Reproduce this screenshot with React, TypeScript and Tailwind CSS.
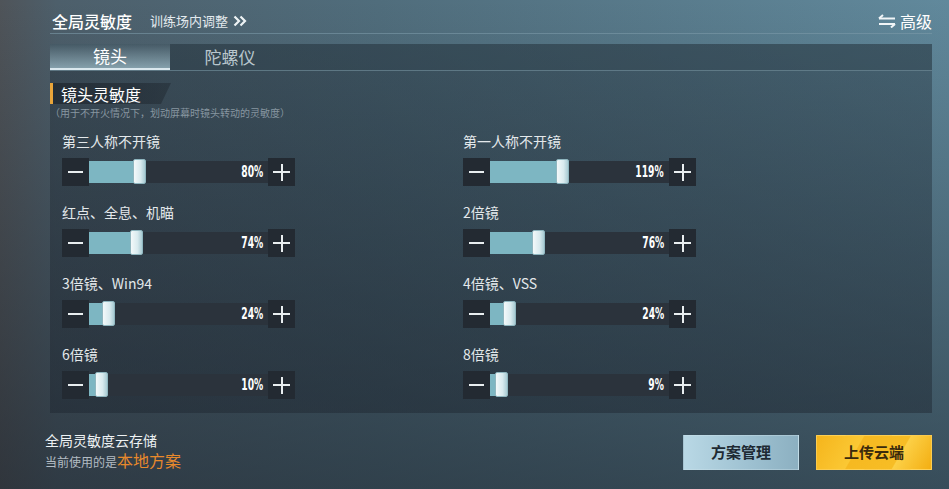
import React from "react";

type Item = { label: string; value: number };

const LEFT: Item[] = [
  { label: "第三人称不开镜", value: 80 },
  { label: "红点、全息、机瞄", value: 74 },
  { label: "3倍镜、Win94", value: 24 },
  { label: "6倍镜", value: 10 },
];

const RIGHT: Item[] = [
  { label: "第一人称不开镜", value: 119 },
  { label: "2倍镜", value: 76 },
  { label: "4倍镜、VSS", value: 24 },
  { label: "8倍镜", value: 9 },
];

const CJK = "font-['Noto_Sans_CJK_SC','Noto_Sans',sans-serif]";
const NUM = "font-['DejaVu_Sans_Condensed','Roboto',sans-serif]";

function Slider({ label, value }: Item) {
  // 0..300% mapped across the track, thumb 13px wide
  const trackW = 179;
  const thumbW = 13;
  const left = (value / 300) * (trackW - thumbW);

  return (
    <div className="flex flex-col">
      <div className={`h-5 text-[14px] leading-5 text-[#e3e8eb] ${CJK}`}>{label}</div>
      <div className="mt-[7px] flex h-7 w-[233px] items-center">
        <div className="flex h-7 w-[27px] items-center justify-center bg-[#232a32]">
          <div className="h-[2px] w-[15px] bg-[#e9eef0]" />
        </div>
        <div className="relative h-[22px] w-[179px] bg-[#2b333c]">
          <div
            className="absolute inset-y-0 left-0 bg-[#7db6c2]"
            style={{ width: left + thumbW / 2 }}
          />
          <div
            className="absolute top-[-2px] h-[25px] w-[13px] rounded-[2px] border border-[#8fb6bf] bg-[linear-gradient(90deg,#f3f9fa_0%,#d8eaee_60%,#a9cbd3_100%)]"
            style={{ left }}
          />
          <div
            className={`absolute right-[5px] top-0 flex h-full origin-right scale-x-[0.68] items-center text-[15px] font-bold text-white ${NUM}`}
          >
            {value}%
          </div>
        </div>
        <div className="relative flex h-7 w-[27px] items-center justify-center bg-[#232a32]">
          <div className="h-[2px] w-[17px] bg-[#e9eef0]" />
          <div className="absolute h-[17px] w-[2px] bg-[#e9eef0]" />
        </div>
      </div>
    </div>
  );
}

function Column({ items }: { items: Item[] }) {
  return (
    <div className="flex flex-col gap-4">
      {items.map((it) => (
        <Slider key={it.label} {...it} />
      ))}
    </div>
  );
}

export default function App() {
  return (
    <div
      className={`relative flex h-[489px] w-[949px] flex-col overflow-hidden bg-[linear-gradient(180deg,rgba(0,0,0,0)_0%,rgba(22,28,36,0.55)_100%),linear-gradient(90deg,#4f5459_0%,#4d5f6b_6%,#506d7c_40%,#61899c_100%)] pl-[50px] pr-[17px] ${CJK}`}
    >
      {/* header */}
      <div className="flex h-[34px] items-center border-b border-[#7b9aa8]/60 pt-[8px]">
        <span className="ml-[2px] text-[16px] font-medium text-white">全局灵敏度</span>
        <span className="ml-[18px] text-[13px] text-[#e3eaee]">训练场内调整</span>
        <svg width="14" height="12" viewBox="0 0 14 12" className="ml-[5px]">
          <path d="M1.5 1.5 L6 6 L1.5 10.5" fill="none" stroke="#eef3f5" strokeWidth="2.2" />
          <path d="M7.5 1.5 L12 6 L7.5 10.5" fill="none" stroke="#eef3f5" strokeWidth="2.2" />
        </svg>
        <div className="ml-auto flex items-center gap-[3px]">
          <svg width="20" height="14" viewBox="0 0 20 14">
            <path d="M2 4.5 H18" stroke="#f1f5f7" strokeWidth="2" />
            <path d="M6 1 L2 4.5" stroke="#f1f5f7" strokeWidth="2" fill="none" />
            <path d="M2 10 H18" stroke="#f1f5f7" strokeWidth="2" />
            <path d="M14 13.5 L18 10" stroke="#f1f5f7" strokeWidth="2" fill="none" />
          </svg>
          <span className="text-[16px] text-white">高级</span>
        </div>
      </div>

      {/* panel */}
      <div className="mt-[10px] flex h-[369px] flex-col bg-[linear-gradient(180deg,rgba(30,42,52,0.38)_0%,rgba(28,36,46,0.45)_100%)]">
        <div className="flex h-[27px] border-b border-[#6f8c99]/70 bg-[#2a3a46]/30">
          <div className="flex w-[120px] items-center justify-center border-b-2 border-[#dbe8ee] bg-[linear-gradient(180deg,rgba(120,150,165,0.25)_0%,rgba(160,190,202,0.75)_100%)] text-[17px] text-white">
            镜头
          </div>
          <div className="flex w-[120px] items-center justify-center text-[17px] text-[#b9c6cd]">
            陀螺仪
          </div>
        </div>

        {/* section title */}
        <div className="mt-[12px] flex h-[21px] items-stretch">
          <div className="w-[3px] bg-[#e9a53a]" />
          <div className="flex w-[118px] items-center bg-[linear-gradient(90deg,rgba(30,38,46,0.75)_0%,rgba(30,38,46,0.45)_100%)] pl-[8px] text-[16px] text-white [clip-path:polygon(0_0,100%_0,calc(100%-10px)_100%,0_100%)]">
            镜头灵敏度
          </div>
        </div>
        <div className="mt-[2px] text-[10px] leading-[14px] text-[#8796a0]">
          （用于不开火情况下，划动屏幕时镜头转动的灵敏度）
        </div>

        <div className="mt-[11px] grid grid-cols-[401px_233px] pl-[12px]">
          <Column items={LEFT} />
          <Column items={RIGHT} />
        </div>
      </div>

      {/* footer */}
      <div className="flex flex-1 items-center pb-[4px]">
        <div className="-ml-[5px] flex flex-col pt-[4px]">
          <span className="text-[14px] leading-[20px] text-[#eef2f4]">全局灵敏度云存储</span>
          <span className="flex items-baseline text-[12px] leading-[20px] text-[#b3bcc3]">
            当前使用的是<span className="text-[16px] text-[#e8892c]">本地方案</span>
          </span>
        </div>
        <div className="ml-auto flex gap-[17px] pt-[6px]">
          <button className="flex h-[35px] w-[116px] items-center justify-center border border-[#cfe4ec]/40 bg-[linear-gradient(90deg,#b9d8e5_0%,#9fc2d2_55%,#8cb0c1_100%)] text-[15px] font-bold text-[#1e2a33]">
            方案管理
          </button>
          <button className="flex h-[35px] w-[116px] items-center justify-center border border-[#ffd970]/60 bg-[linear-gradient(120deg,#f5b51c_0%,#fbc834_35%,#f6b921_36%,#f7bd25_70%,#fcd046_71%,#f3ae12_100%)] text-[15px] font-bold text-[#3a2a0c]">
            上传云端
          </button>
        </div>
      </div>
    </div>
  );
}
